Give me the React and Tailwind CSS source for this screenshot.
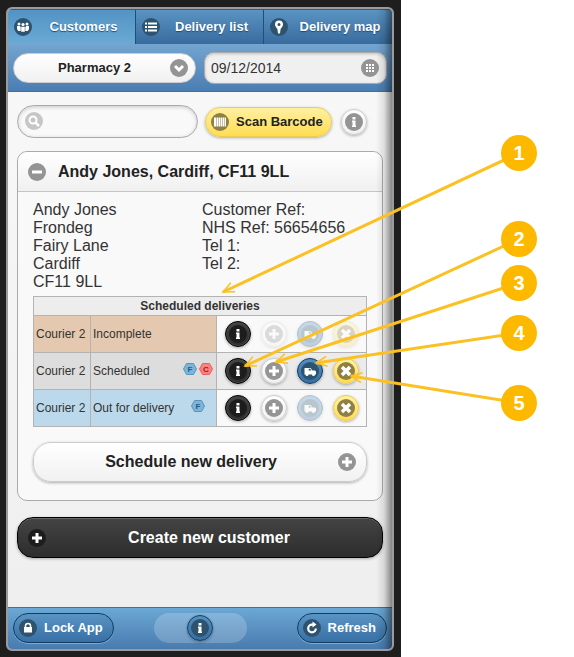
import { useState } from "react"
import clsx from "clsx"

const Glyph = ({ name }) => {
  switch (name) {
    case "users":
      return (
        <g fill="currentColor">
          <circle cx="5" cy="6" r="1.5" />
          <circle cx="9" cy="6.5" r="1.6" />
          <circle cx="13" cy="6" r="1.5" />
          <path d="M3 8h3l.7 1.5V13H4.200L3 11z" />
          <path d="M15 8h-3l-.7 1.5V13h2.500L15 11z" />
          <path d="M7.200 8.700h3.600v5H7.200z" />
        </g>
      )
    case "list":
      return (
        <g fill="currentColor">
          <path d="M3 4.500h2v2H3zM3 8h2v2H3zM3 11.500h2v2H3z" />
          <path d="M6 4.500h9v2H6zM6 8h9v2H6zM6 11.500h9v2H6z" />
        </g>
      )
    case "pin":
      return (
        <path
          fill="currentColor"
          fillRule="evenodd"
          d="M9 2.500a4 4 0 0 1 4 4c0 1.900-1.600 3.400-2.400 4.500L10 15.500H8L7.400 11C6.600 9.900 5 8.400 5 6.500a4 4 0 0 1 4-4zm0 2.500a1.500 1.500 0 1 0 0 3 1.500 1.500 0 0 0 0-3z"
        />
      )
    case "down":
      return <path d="M5 7l4 4 4-4" fill="none" stroke="currentColor" strokeWidth="3" />
    case "grid":
      return (
        <path
          fill="currentColor"
          d="M5 5h2v2H5zM8 5h2v2H8zM11 5h2v2h-2zM5 8h2v2H5zM8 8h2v2H8zM11 8h2v2h-2zM5 11h2v2H5zM8 11h2v2H8zM11 11h2v2h-2z"
        />
      )
    case "search":
      return (
        <g fill="none" stroke="currentColor" strokeWidth="2">
          <circle cx="8" cy="8" r="3.500" />
          <path d="M10.500 10.500l3.500 3.500" strokeWidth="2.500" />
        </g>
      )
    case "barcode":
      return <path fill="currentColor" d="M3 4.500h2v9H3zM5.500 4.500h2v9h-2zM8 4.500h1v9H8zM9.500 4.500h2v9h-2zM12 4.500h1v9h-1zM13.500 4.500H15v9h-1.500z" />
    case "info":
      return <path fill="currentColor" d="M7.500 4h3v2.500h-3zM7 7.500h3.500v5h.5V14H7v-1.500h.5V9H7z" />
    case "plus":
      return <path fill="currentColor" d="M7.500 4h3v3.500H14v3h-3.500V14h-3v-3.500H4v-3h3.500z" />
    case "minus":
      return <path fill="currentColor" d="M4 7.500h10v3H4z" />
    case "cross":
      return <path d="M5 5l8 8M13 5l-8 8" stroke="currentColor" strokeWidth="3.500" />
    case "truck":
      return (
        <g fill="currentColor">
          <path d="M3.500 6h6l2 2.500h2.500l1 1v3H3.500z" />
          <circle cx="6" cy="12.500" r="1.500" />
          <circle cx="12.500" cy="12.500" r="1.500" />
          <path className="text-[#2d536f]" d="M7.700 6.700h1.500l1.300 1.800H7.700z" />
        </g>
      )
    case "lock":
      return (
        <g>
          <path fill="currentColor" d="M5 8h8v5.500H5z" />
          <path d="M6.500 8.500V7a2.500 2.500 0 0 1 5 0v1.500" fill="none" stroke="currentColor" strokeWidth="1.500" />
        </g>
      )
    case "refresh":
      return (
        <g>
          <path d="M12.800 9.500A3.800 3.800 0 1 1 9 5.700h1" fill="none" stroke="currentColor" strokeWidth="2.200" />
          <path fill="currentColor" d="M9.500 2.500l4 3-4 3z" />
        </g>
      )
    default:
      return null
  }
}

const discTones = {
  gray: "bg-[#949494]",
  faint: "bg-[#c6c6c6]",
  navy: "bg-[#2d536f]",
  olive: "bg-[#8f8144]",
  black: "bg-[#1d1d1d]",
}

const Disc = ({ name, tone = "gray" }) => (
  <span className={clsx("block h-[18px] w-[18px] shrink-0 rounded-full text-white", discTones[tone])}>
    <svg viewBox="0 0 18 18" className="block h-full w-full" aria-hidden="true">
      <Glyph name={name} />
    </svg>
  </span>
)

const roundTones = {
  white: "border-[#ccc] bg-linear-to-b from-white to-[#f1f1f1]",
  black: "border-black bg-linear-to-b from-[#444] to-[#2d2d2d] inset-shadow-[0_0_0_1px_#4a4a4a]",
  blue: "border-[#0f3d5f] bg-linear-to-b from-[#5391c0] to-[#386fa5]",
  yellow: "border-[#eccb58] bg-linear-to-b from-[#fff3a5] to-[#ffdd4e]",
}

const RoundButton = ({ label, icon, color, tone, disabled }) => (
  <button
    type="button"
    aria-label={label}
    disabled={disabled}
    className={clsx(
      "flex h-[26px] w-[26px] shrink-0 items-center justify-center rounded-full border shadow-[0_1px_3px_rgba(0,0,0,0.3)]",
      roundTones[color],
      disabled && "opacity-30"
    )}
  >
    <Disc name={icon} tone={tone} />
  </button>
)

const Flag = ({ letter }) => (
  <svg viewBox="0 0 14 12" className="h-3 w-[14px]">
    <path
      d="M3.500 .5h7L13.500 6l-3 5.500h-7L.5 6z"
      fill={letter === "F" ? "#7db5da" : "#fb8080"}
      stroke={letter === "F" ? "#5a94bd" : "#ee5c5c"}
    />
    <text
      x="7"
      y="9"
      textAnchor="middle"
      fontSize="8"
      fontWeight="bold"
      fill={letter === "F" ? "#285a80" : "#a01818"}
    >
      {letter}
    </text>
  </svg>
)

const tabs = [
  { id: "customers", label: "Customers", icon: "users" },
  { id: "list", label: "Delivery list", icon: "list" },
  { id: "map", label: "Delivery map", icon: "pin" },
]

const deliveries = [
  { courier: "Courier 2", status: "Incomplete", flags: [], row: "bg-[#e4c9b0]", cell: "bg-[#f9f9f9]", off: ["add", "send", "cancel"] },
  { courier: "Courier 2", status: "Scheduled", flags: ["F", "C"], row: "bg-[#ddd]", cell: "bg-[#ebebeb]", off: [] },
  { courier: "Courier 2", status: "Out for delivery", flags: ["F"], row: "bg-[#bcd9eb]", cell: "bg-[#f9f9f9]", off: ["send"] },
]

const notes = [
  { n: 1, gap: "mt-0", from: [519, 153], to: [223, 292] },
  { n: 2, gap: "mt-[50px]", from: [519, 239], to: [245, 366] },
  { n: 3, gap: "mt-2", from: [519, 283], to: [276, 362] },
  { n: 4, gap: "mt-[14px]", from: [519, 333], to: [316, 363] },
  { n: 5, gap: "mt-[34px]", from: [519, 403], to: [351, 376] },
]

const Arrow = ({ from, to }) => {
  const angle = (Math.atan2(to[1] - from[1], to[0] - from[0]) * 180) / Math.PI
  return (
    <g stroke="#fbc022" fill="none">
      <line x1={from[0]} y1={from[1]} x2={to[0]} y2={to[1]} strokeWidth="3" />
      <path d="M-11 -5L0 0L-11 5" strokeWidth="1.5" transform={`translate(${to[0]} ${to[1]}) rotate(${angle})`} />
    </g>
  )
}

const Header = () => {
  const [active, setActive] = useState("customers")

  return (
    <header className="text-[13px] font-bold">
      <nav className="grid grid-cols-3 border-t border-[#2d5f8c] text-white text-shadow-[0_1px_1px_#194b7e]">
        {tabs.map((tab) => (
          <a
            key={tab.id}
            href={`#${tab.id}`}
            onClick={() => setActive(tab.id)}
            className={clsx(
              "flex h-[34px] items-center border-r border-[#1c4f7a] pl-1.5 last:border-r-0",
              active === tab.id ? "bg-linear-to-b from-[#5393c5] to-[#6aaad4]" : "bg-linear-to-b from-[#5a94c3] to-[#396b9e]"
            )}
          >
            <Disc name={tab.icon} tone="navy" />
            <span className="flex-1 text-center whitespace-nowrap">{tab.label}</span>
          </a>
        ))}
      </nav>
      <div className="grid h-[48px] grid-cols-2 items-center gap-2 border-b border-[#456f9a] bg-linear-to-b from-[#74a5d0] to-[#4a7db2] px-[5px]">
        <div className="relative">
          <select
            aria-label="Pharmacy"
            className="block h-[30px] w-full appearance-none rounded-full border border-[#ccc] bg-linear-to-b from-white to-[#f1f1f1] pr-8 pl-3 text-center text-[13px] font-bold text-[#222]"
          >
            <option>Pharmacy 2</option>
          </select>
          <span className="pointer-events-none absolute top-1.5 right-2">
            <Disc name="down" />
          </span>
        </div>
        <div className="relative">
          <input
            type="text"
            aria-label="Delivery date"
            defaultValue="09/12/2014"
            className="block h-8 w-full rounded-[10px] border border-[#aaa] bg-[#f0f0f0] px-1.5 text-sm font-normal text-[#333] inset-shadow-[0_1px_3px_rgba(0,0,0,0.2)]"
          />
          <span className="pointer-events-none absolute top-[7px] right-2">
            <Disc name="grid" />
          </span>
        </div>
      </div>
    </header>
  )
}

const DeliveryTable = () => (
  <table className="mt-[5px] w-full border-collapse text-left text-xs text-[#333]">
    <thead>
      <tr>
        <th colSpan={3} className="h-[19px] border border-[#b3b3b3] bg-[#ededed] p-0 text-center font-bold">
          Scheduled deliveries
        </th>
      </tr>
    </thead>
    <tbody>
      {deliveries.map((d) => (
        <tr key={d.status} className={d.row}>
          <td className="h-[37px] w-[57px] border border-[#b3b3b3] p-0 pl-0.5 whitespace-nowrap">{d.courier}</td>
          <td className="border border-[#b3b3b3] p-0 pr-[3px] pl-0.5">
            <div className="flex items-center justify-between">
              <span className="whitespace-nowrap">{d.status}</span>
              <span className="flex w-[30px] justify-center gap-0.5 pb-1">
                {d.flags.map((f) => (
                  <Flag key={f} letter={f} />
                ))}
              </span>
            </div>
          </td>
          <td className={clsx("w-[150px] border border-[#b3b3b3] p-0", d.cell)}>
            <div className="flex justify-center gap-2.5">
              <RoundButton label="Delivery details" icon="info" color="black" tone="black" />
              <RoundButton label="Add item" icon="plus" color="white" disabled={d.off.includes("add")} />
              <RoundButton label="Send out" icon="truck" color="blue" tone="navy" disabled={d.off.includes("send")} />
              <RoundButton label="Cancel delivery" icon="cross" color="yellow" tone="olive" disabled={d.off.includes("cancel")} />
            </div>
          </td>
        </tr>
      ))}
    </tbody>
  </table>
)

const CustomerCard = () => (
  <section className="mt-[13px] rounded-[10px] border border-[#aaa] bg-[#f9f9f9]">
    <h2>
      <button
        type="button"
        className="flex h-10 w-full items-center gap-3 rounded-t-[10px] border-b border-[#c4c4c4] bg-linear-to-b from-white to-[#f0f0f0] px-2.5 text-base font-bold text-[#222]"
      >
        <Disc name="minus" />
        <span className="whitespace-nowrap">Andy Jones, Cardiff, CF11 9LL</span>
      </button>
    </h2>
    <div className="px-[15px] pt-[9px] pb-[18px]">
      <div className="grid grid-cols-2 text-base leading-[18px] text-[#333]">
        <address className="not-italic">
          Andy Jones
          <br />
          Frondeg
          <br />
          Fairy Lane
          <br />
          Cardiff
          <br />
          CF11 9LL
        </address>
        <div className="pl-0.5 whitespace-nowrap">
          <p>Customer Ref:</p>
          <p>NHS Ref: 56654656</p>
          <p>Tel 1:</p>
          <p>Tel 2:</p>
        </div>
      </div>
      <DeliveryTable />
      <button
        type="button"
        className="mt-[15px] flex h-10 w-full items-center rounded-[18px] border border-[#ccc] bg-linear-to-b from-white to-[#f1f1f1] px-2.5 text-base font-bold text-[#222] shadow-[0_1px_3px_rgba(0,0,0,0.3)]"
      >
        <span className="flex-1 text-center">Schedule new delivery</span>
        <Disc name="plus" />
      </button>
    </div>
  </section>
)

const Footer = () => (
  <footer className="grid h-[42px] grid-cols-[1fr_auto_1fr] items-center border-t border-[#456f9a] bg-linear-to-b from-[#6ba8d6] to-[#497bae] px-[5px] pb-0.5 text-[13px] font-bold text-white text-shadow-[0_1px_1px_#194b7e]">
    <button
      type="button"
      className="flex h-[30px] items-center gap-[7px] justify-self-start rounded-full border border-[#0f3d5f] bg-linear-to-b from-[#5a94c3] to-[#386fa5] pr-2.5 pl-[5px] shadow-[0_1px_0_#79acd5]"
    >
      <Disc name="lock" tone="navy" />
      Lock App
    </button>
    <div className="flex h-[30px] w-[93px] items-center justify-center rounded-full bg-white/20">
      <RoundButton label="Information" icon="info" color="blue" tone="navy" />
    </div>
    <button
      type="button"
      className="flex h-[30px] items-center gap-[7px] justify-self-end rounded-full border border-[#0f3d5f] bg-linear-to-b from-[#5a94c3] to-[#386fa5] pr-2.5 pl-[5px] shadow-[0_1px_0_#79acd5]"
    >
      <Disc name="refresh" tone="navy" />
      Refresh
    </button>
  </footer>
)

const App = () => {
  return (
    <div className="relative flex min-h-screen bg-white font-['Liberation_Sans',Arial,sans-serif]">
      <div className="flex flex-1 flex-col bg-[#1e1e1e] pt-[7px] pr-[7px] pb-1.5 pl-1.5">
        <div className="relative flex flex-1 flex-col overflow-hidden rounded-md border-2 border-[#9b9b9b] bg-linear-to-b from-[#f9f9f9] to-[#eee]">
          <Header />
          <main className="flex-1 px-[9px] pt-[13px] pb-4">
            <div className="flex items-center">
              <div className="relative w-[181px]">
                <input
                  type="search"
                  aria-label="Search customers"
                  className="block h-[33px] w-full rounded-full border border-[#aaa] bg-[#f9f9f9] pr-3 pl-8 text-sm inset-shadow-[0_1px_4px_rgba(0,0,0,0.2)]"
                />
                <span className="pointer-events-none absolute top-[7px] left-2">
                  <Disc name="search" tone="faint" />
                </span>
              </div>
              <button
                type="button"
                className="mr-[9px] ml-[7px] flex h-[30px] items-center gap-[7px] rounded-full border border-[#eccb58] bg-linear-to-b from-[#fff0a0] to-[#ffdd4e] pr-2 pl-[5px] text-[13px] font-bold whitespace-nowrap text-[#222] shadow-[0_1px_3px_rgba(0,0,0,0.3)]"
              >
                <Disc name="barcode" tone="olive" />
                Scan Barcode
              </button>
              <RoundButton label="Search help" icon="info" color="white" />
            </div>
            <CustomerCard />
            <button
              type="button"
              className="mt-4 flex h-[41px] w-full items-center rounded-[16px] border border-black bg-linear-to-b from-[#444] to-[#2d2d2d] px-2.5 text-base font-bold text-white shadow-[0_1px_3px_rgba(0,0,0,0.3)] inset-shadow-[0_1px_0_#666]"
            >
              <Disc name="plus" tone="black" />
              <span className="flex-1 text-center">Create new customer</span>
            </button>
          </main>
          <Footer />
          <div className="pointer-events-none absolute inset-y-0 right-0 w-4 bg-linear-to-r from-transparent via-black/10 to-black/45" />
        </div>
      </div>

      <svg className="pointer-events-none absolute top-0 right-0" width="574" height="657" aria-hidden="true">
        {notes.map((note) => (
          <Arrow key={note.n} from={note.from} to={note.to} />
        ))}
      </svg>
      <ol className="relative w-[173px] pt-[135px] pl-[100px]">
        {notes.map((note) => (
          <li
            key={note.n}
            className={clsx(
              "flex h-9 w-9 items-center justify-center rounded-full bg-[#fdb900] text-xl font-bold text-white",
              note.gap
            )}
          >
            {note.n}
          </li>
        ))}
      </ol>
    </div>
  )
}

export default App
